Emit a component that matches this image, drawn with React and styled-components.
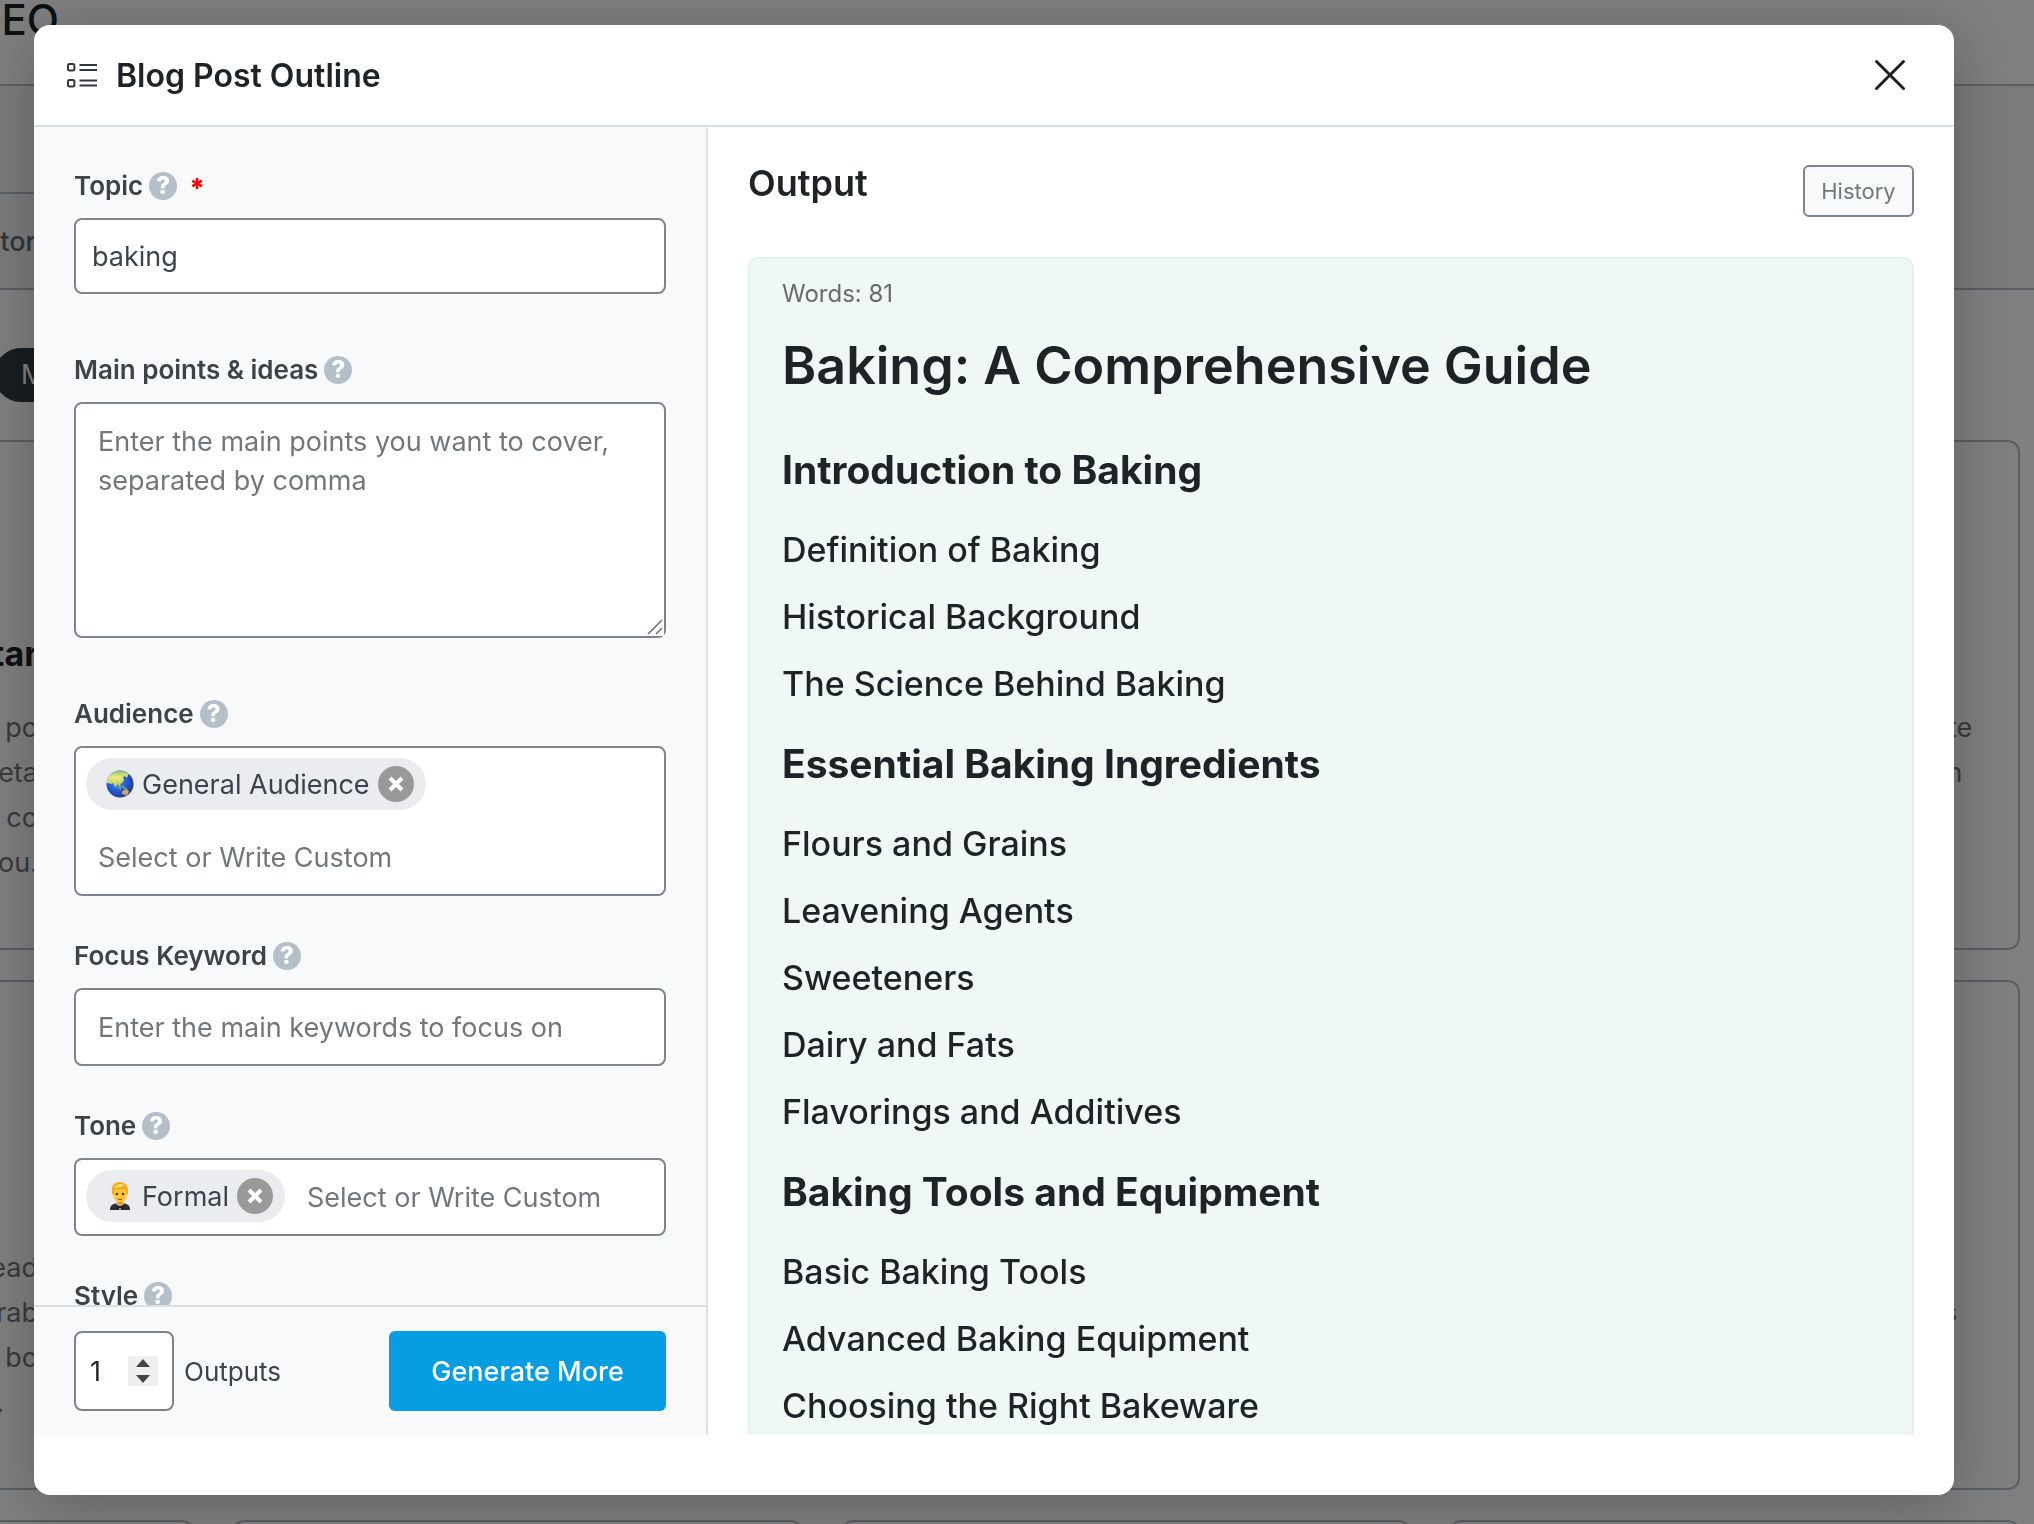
import React, { useState } from 'react'
import styled, { createGlobalStyle } from 'styled-components'

const GlobalStyle = createGlobalStyle`
  * {
    box-sizing: border-box;
  }

  html,
  body,
  #root {
    height: 100%;
  }

  body {
    margin: 0;
    overflow: hidden;
    background: #fff;
    color: #3c434a;
    font-family: Inter, 'Liberation Sans', sans-serif;
    font-size: 27px;
  }

  button,
  input,
  textarea {
    margin: 0;
    font: inherit;
    color: inherit;
  }
`

/* Page behind the dialog */

const Page = styled.div`
  height: 100%;
  overflow: hidden;
`

const PageHeader = styled.header`
  height: 86px;
  border-bottom: 2px solid #b5bfc9;
  color: #1d2327;
  font-size: 42px;
  font-weight: 500;
  line-height: 40px;
`

const PageBand = styled.div`
  height: 204px;
  border-bottom: 2px solid #b5bfc9;
  background: #f3f6f9;
`

const PageTabs = styled.nav`
  width: 240px;
  height: 108px;
  border-bottom: 2px solid #b5bfc9;
`

const EdgeText = styled.div`
  width: ${props => props.$width || '36px'};
  display: flex;
  justify-content: flex-end;
  white-space: nowrap;
`

const TabText = styled(EdgeText)`
  color: #646c74;
  font-weight: 500;
  line-height: 96px;
`

const Filters = styled.div`
  padding: 58px 0 38px;
`

const FilterPill = styled.div`
  width: 180px;
  height: 54px;
  margin-left: -6px;
  padding-left: 27px;
  border-radius: 27px;
  background: #2f3a44;
  color: #fff;
  line-height: 54px;
`

const CardGrid = styled.div`
  display: grid;
  grid-template-columns: 222px repeat(3, 1fr);
  grid-auto-rows: 510px;
  gap: 30px 38px;
  margin: 0 14px 0 -28px;
`

const Card = styled.section`
  padding: 186px 0 0 28px;
  border: 2px solid #b5bcc5;
  border-radius: 12px;
`

const CardTitle = styled(EdgeText)`
  margin-bottom: 25px;
  color: #1d2327;
  font-size: 34px;
  font-weight: 700;
  line-height: 52px;
`

const CardLine = styled(EdgeText)`
  padding-right: ${props => props.$inset || 0};
  color: #72777c;
  line-height: 45px;
`

/* Dialog */

const Overlay = styled.div`
  position: fixed;
  inset: 0;
  display: flex;
  padding: 25px 80px 29px 34px;
  background: rgba(0, 0, 0, 0.5);
`

const Modal = styled.div`
  flex: 1;
  min-width: 0;
  display: flex;
  flex-direction: column;
  padding-bottom: 60px;
  border-radius: 16px;
  background: #fff;
  box-shadow: 0 10px 60px rgba(0, 0, 0, 0.25);
`

const ModalHeader = styled.header`
  display: flex;
  align-items: center;
  height: 102px;
  padding: 0 46px 0 32px;
  border-bottom: 2px solid #dadfe4;
`

const ModalTitle = styled.h1`
  flex: 1;
  margin: 0 0 0 18px;
  color: #1d2327;
  font-size: 32px;
  font-weight: 600;
`

const CloseButton = styled.button`
  display: flex;
  padding: 0;
  border: 0;
  background: none;
  cursor: pointer;
`

const ModalBody = styled.div`
  flex: 1;
  min-height: 0;
  display: flex;
`

const Sidebar = styled.form`
  flex: 0 0 674px;
  display: flex;
  flex-direction: column;
  border-right: 2px solid #dadfe4;
  background: #f8f9fb;
`

const Fields = styled.div`
  flex: 1;
  min-height: 0;
  overflow: hidden;
  padding: 45px 40px 0;
`

const Field = styled.div`
  margin-bottom: ${props => (props.$wide ? '62px' : '46px')};
`

const LabelRow = styled.div`
  display: flex;
  align-items: center;
  gap: 6px;
  height: 28px;
  margin-bottom: 18px;

  label {
    font-size: 26px;
    font-weight: 600;
    line-height: 28px;
  }
`

const HelpBadge = styled.span`
  width: 28px;
  height: 28px;
  border-radius: 50%;
  background: #b5bfc9;
  color: #fff;
  font-size: 24px;
  font-weight: 800;
  line-height: 28px;
  text-align: center;
`

const Required = styled.span`
  margin-left: 6px;
  padding-top: 6px;
  color: #f00;
  font-weight: 800;
  line-height: 28px;
`

const control = `
  display: block;
  width: 100%;
  border: 2px solid #7e848d;
  border-radius: 8px;
  background: #fff;
  outline: 0;

  &::placeholder {
    color: #72777c;
    opacity: 1;
  }
`

const TextInput = styled.input`
  ${control}
  height: ${props => (props.$tall ? '78px' : '76px')};
  padding: 0 ${props => (props.$tall ? '22px' : '16px')};
`

const TextAreaWrap = styled.div`
  position: relative;

  svg {
    position: absolute;
    right: 2px;
    bottom: 2px;
    pointer-events: none;
  }
`

const TextArea = styled.textarea`
  ${control}
  height: 236px;
  padding: 18px 22px;
  line-height: 39px;
  resize: vertical;

  &::-webkit-resizer {
    background: #fff;
  }
`

const TagBox = styled.div`
  ${control}
  display: flex;
  flex-wrap: wrap;

  input {
    flex: 1 1 320px;
    min-width: 0;
    height: 74px;
    padding: 0 0 0 22px;
    border: 0;
    background: none;
    outline: 0;
  }

  input::placeholder {
    color: #72777c;
    opacity: 1;
  }
`

const Chip = styled.span`
  display: flex;
  align-items: center;
  gap: 8px;
  height: 52px;
  margin: 10px 0 10px 10px;
  padding: 0 12px 0 20px;
  border-radius: 26px;
  background: #ebecf0;
`

const ChipRemove = styled.button`
  display: flex;
  align-items: center;
  justify-content: center;
  width: 36px;
  height: 36px;
  padding: 0;
  border: 0;
  border-radius: 50%;
  background: #999;
  cursor: pointer;
`

const SidebarFooter = styled.div`
  display: flex;
  align-items: center;
  padding: 24px 40px;
  border-top: 2px solid #dadfe4;

  label {
    font-size: 26px;
  }
`

const Stepper = styled.div`
  display: flex;
  align-items: center;
  width: 100px;
  height: 80px;
  margin-right: 10px;
  padding: 0 14px;
  border: 2px solid #7e848d;
  border-radius: 8px;
  background: #fff;
  color: #1d2327;

  input {
    flex: 1;
    min-width: 0;
    padding: 0;
    border: 0;
    outline: 0;
    appearance: textfield;
  }

  input::-webkit-inner-spin-button {
    display: none;
  }
`

const StepButtons = styled.div`
  display: flex;
  flex-direction: column;
  background: #efefef;

  button {
    display: flex;
    align-items: center;
    justify-content: center;
    width: 30px;
    height: 15px;
    padding: 0;
    border: 0;
    background: none;
  }
`

const GenerateButton = styled.button`
  width: 277px;
  height: 80px;
  margin-left: auto;
  border: 0;
  border-radius: 6px;
  background: #069de3;
  color: #fff;
  font-weight: 500;
  cursor: pointer;
`

const OutputPanel = styled.section`
  flex: 1;
  min-width: 0;
  display: flex;
  flex-direction: column;
  overflow: hidden;
  padding: 38px 40px 0;
`

const OutputHeader = styled.div`
  display: flex;
  align-items: flex-start;
  justify-content: space-between;
  margin-bottom: 40px;

  h2 {
    margin: 0;
    color: #1d2327;
    font-size: 36px;
    font-weight: 600;
    line-height: 36px;
  }
`

const HistoryButton = styled.button`
  width: 111px;
  height: 52px;
  padding: 0;
  border: 2px solid #7e848d;
  border-radius: 6px;
  background: #f8f9fb;
  color: #72777c;
  font-size: 22px;
  cursor: pointer;
`

const Result = styled.article`
  flex: 1 0 auto;
  padding: 19px 32px;
  border: 2px solid #e3f2ed;
  border-bottom: 0;
  border-radius: 10px 10px 0 0;
  background: #eff8f5;
  color: #1d2327;

  h1,
  h2,
  h3 {
    margin: 0;
  }

  h1 {
    margin-bottom: 21px;
    font-size: 52px;
    font-weight: 600;
    line-height: 72px;
  }

  h2 {
    font-size: 39px;
    font-weight: 700;
    line-height: 93px;
  }

  h3 {
    font-size: 34px;
    font-weight: 500;
    line-height: 67px;
  }
`

const WordCount = styled.p`
  margin: 0 0 20px;
  color: #666d6b;
  font-size: 24px;
  line-height: 32px;
`

const ListIcon = () => (
  <svg width="32" height="28" viewBox="0 0 32 28" fill="none" stroke="#32373c" strokeWidth="2">
    <rect x="2" y="3" width="6.400" height="6.400" rx="1.500" />
    <rect x="2" y="19" width="6.400" height="6.400" rx="1.500" />
    <path d="M13.500 4h17.500M13.500 9h17.500M13.500 19.500h17.500M13.500 24.500h17.500" />
  </svg>
)

const CloseIcon = () => (
  <svg width="36" height="36" viewBox="0 0 36 36" stroke="#1e1e1e" strokeWidth="3" strokeLinecap="round">
    <path d="M4.500 4.500l27 27M31.500 4.500l-27 27" />
  </svg>
)

const ResizeGrip = () => (
  <svg width="18" height="18" viewBox="0 0 18 18" stroke="#6b6b6b" strokeWidth="1.500">
    <rect width="18" height="18" fill="#fff" stroke="none" />
    <path d="M2 16L16 2M10 16l6-6" />
  </svg>
)

const GlobeIcon = () => (
  <svg width="28" height="28" viewBox="0 0 28 28">
    <defs>
      <radialGradient id="sea" cx="0.4" cy="0.4" r="0.62">
        <stop offset="0" stopColor="#4b8fe8" />
        <stop offset="0.6" stopColor="#2559cf" />
        <stop offset="1" stopColor="#1a3a96" />
      </radialGradient>
      <linearGradient id="land" x1="0" y1="0" x2="0" y2="1">
        <stop offset="0" stopColor="#8fb877" />
        <stop offset="0.4" stopColor="#e9ea7c" />
        <stop offset="1" stopColor="#a9c766" />
      </linearGradient>
      <clipPath id="globe">
        <circle cx="14" cy="14" r="13.500" />
      </clipPath>
    </defs>
    <circle cx="14" cy="14" r="13.500" fill="url(#sea)" />
    <g clipPath="url(#globe)">
      <path
        d="M1 9L5 3l6-3h8l5 4-2 1-1 3-2-2-2 1 1 3-2 3-2 1 1 3-2-1-2-2-1 4-2-3-1-2-2 1-3-1-3 1z"
        fill="url(#land)"
      />
      <path d="M12 17l3 2M16 16l2 2M18 18l3 1" stroke="#7fae74" strokeWidth="1.500" />
      <path d="M16 22l2-2 2-.5 2 .5 1 2-2 3-2 .5-1-1.500-2 .5z" fill="#d0a862" />
    </g>
  </svg>
)

const TuxedoIcon = () => (
  <svg width="28" height="28" viewBox="0 0 28 28">
    <path d="M4 28c0-5 3-7 10-7s10 2 10 7z" fill="#2c2d33" />
    <path d="M10 21h8l-4 7z" fill="#f4f4f6" />
    <path d="M11 23l3 1 3-1v4l-3-1-3 1z" fill="#222" />
    <path d="M11 18h6v4l-3 2-3-2z" fill="#e89b1c" />
    <ellipse cx="14" cy="12" rx="7" ry="8.500" fill="#fdc52f" />
    <path d="M6 12C5 4 8 0 14 0c6 0 9 5 8 12l-1 1c0-3-1-5-3-6-3 1-6 1-8 0-2 1-2 3-2 6z" fill="#f2a91d" />
    <path d="M8 6c2-4 7-5 11-3-3 2-7 3-11 3z" fill="#ffdc62" />
    <circle cx="11" cy="12" r="1.200" fill="#4b2f12" />
    <circle cx="17" cy="12" r="1.200" fill="#4b2f12" />
    <path d="M12 17q2 1 4 0" stroke="#a5540f" strokeWidth="1.200" fill="none" />
  </svg>
)

const RemoveIcon = () => (
  <svg width="16" height="16" viewBox="0 0 16 16" stroke="#fff" strokeWidth="4">
    <path d="M2 2l12 12M14 2L2 14" />
  </svg>
)

const Arrow = ({ down }) => (
  <svg width="14" height="9" viewBox="0 0 14 9" fill="#454545">
    <path d={down ? 'M0 1h14L7 9z' : 'M0 8h14L7 0z'} />
  </svg>
)

const FieldLabel = ({ id, children, required }) => (
  <LabelRow>
    <label htmlFor={id}>{children}</label>
    <HelpBadge>?</HelpBadge>
    {required && <Required>*</Required>}
  </LabelRow>
)

const TagField = ({ id, label, icon, tag }) => {
  const [selected, setSelected] = useState(true)

  return (
    <Field>
      <FieldLabel id={id}>{label}</FieldLabel>
      <TagBox>
        {selected && (
          <Chip>
            {icon}
            {tag}
            <ChipRemove type="button" aria-label="Remove" onClick={() => setSelected(false)}>
              <RemoveIcon />
            </ChipRemove>
          </Chip>
        )}
        <input id={id} placeholder="Select or Write Custom" />
      </TagBox>
    </Field>
  )
}

const sections = [
  {
    title: 'Introduction to Baking',
    items: ['Definition of Baking', 'Historical Background', 'The Science Behind Baking']
  },
  {
    title: 'Essential Baking Ingredients',
    items: [
      'Flours and Grains',
      'Leavening Agents',
      'Sweeteners',
      'Dairy and Fats',
      'Flavorings and Additives'
    ]
  },
  {
    title: 'Baking Tools and Equipment',
    items: ['Basic Baking Tools', 'Advanced Baking Equipment', 'Choosing the Right Bakeware']
  }
]

const BackgroundPage = () => (
  <Page>
    <PageHeader>
      <EdgeText $width="59px">EO</EdgeText>
    </PageHeader>
    <PageBand>
      <PageTabs />
      <TabText>tor</TabText>
    </PageBand>
    <Filters>
      <FilterPill>M</FilterPill>
    </Filters>
    <CardGrid>
      <Card>
        <CardTitle>tar</CardTitle>
        <CardLine>po</CardLine>
        <CardLine>eta</CardLine>
        <CardLine>n co</CardLine>
        <CardLine>ou.</CardLine>
      </Card>
      <Card />
      <Card />
      <Card>
        <CardTitle>&nbsp;</CardTitle>
        <CardLine $width="493px">te</CardLine>
        <CardLine $width="493px" $inset="10px">m</CardLine>
      </Card>
      <Card>
        <CardTitle>&nbsp;</CardTitle>
        <CardLine>ead</CardLine>
        <CardLine>rab</CardLine>
        <CardLine>bo</CardLine>
        <CardLine $inset="34px">.</CardLine>
      </Card>
      <Card />
      <Card />
      <Card>
        <CardTitle>&nbsp;</CardTitle>
        <CardLine>&nbsp;</CardLine>
        <CardLine $width="493px" $inset="15px">s</CardLine>
      </Card>
      <Card />
      <Card />
      <Card />
      <Card />
    </CardGrid>
  </Page>
)

const App = () => {
  const [topic, setTopic] = useState('baking')
  const [outputs, setOutputs] = useState(1)

  return (
    <>
      <GlobalStyle />
      <BackgroundPage />
      <Overlay>
        <Modal role="dialog" aria-labelledby="modal-title">
          <ModalHeader>
            <ListIcon />
            <ModalTitle id="modal-title">Blog Post Outline</ModalTitle>
            <CloseButton type="button" aria-label="Close">
              <CloseIcon />
            </CloseButton>
          </ModalHeader>
          <ModalBody>
            <Sidebar onSubmit={e => e.preventDefault()}>
              <Fields>
                <Field $wide>
                  <FieldLabel id="topic" required>
                    Topic
                  </FieldLabel>
                  <TextInput id="topic" value={topic} onChange={e => setTopic(e.target.value)} />
                </Field>
                <Field $wide>
                  <FieldLabel id="points">Main points &amp; ideas</FieldLabel>
                  <TextAreaWrap>
                    <TextArea
                      id="points"
                      placeholder="Enter the main points you want to cover, separated by comma"
                    />
                    <ResizeGrip />
                  </TextAreaWrap>
                </Field>
                <TagField
                  id="audience"
                  label="Audience"
                  icon={<GlobeIcon />}
                  tag="General Audience"
                />
                <Field>
                  <FieldLabel id="keyword">Focus Keyword</FieldLabel>
                  <TextInput id="keyword" $tall placeholder="Enter the main keywords to focus on" />
                </Field>
                <TagField id="tone" label="Tone" icon={<TuxedoIcon />} tag="Formal" />
                <Field>
                  <FieldLabel id="style">Style</FieldLabel>
                  <TextInput id="style" $tall />
                </Field>
              </Fields>
              <SidebarFooter>
                <Stepper>
                  <input
                    id="outputs"
                    type="number"
                    min="1"
                    value={outputs}
                    onChange={e => setOutputs(Number(e.target.value))}
                  />
                  <StepButtons>
                    <button type="button" aria-label="More" onClick={() => setOutputs(outputs + 1)}>
                      <Arrow />
                    </button>
                    <button
                      type="button"
                      aria-label="Fewer"
                      onClick={() => setOutputs(Math.max(1, outputs - 1))}
                    >
                      <Arrow down />
                    </button>
                  </StepButtons>
                </Stepper>
                <label htmlFor="outputs">Outputs</label>
                <GenerateButton type="submit">Generate More</GenerateButton>
              </SidebarFooter>
            </Sidebar>
            <OutputPanel>
              <OutputHeader>
                <h2>Output</h2>
                <HistoryButton type="button">History</HistoryButton>
              </OutputHeader>
              <Result>
                <WordCount>Words: 81</WordCount>
                <h1>Baking: A Comprehensive Guide</h1>
                {sections.map(section => (
                  <React.Fragment key={section.title}>
                    <h2>{section.title}</h2>
                    {section.items.map(item => (
                      <h3 key={item}>{item}</h3>
                    ))}
                  </React.Fragment>
                ))}
              </Result>
            </OutputPanel>
          </ModalBody>
        </Modal>
      </Overlay>
    </>
  )
}

export default App
